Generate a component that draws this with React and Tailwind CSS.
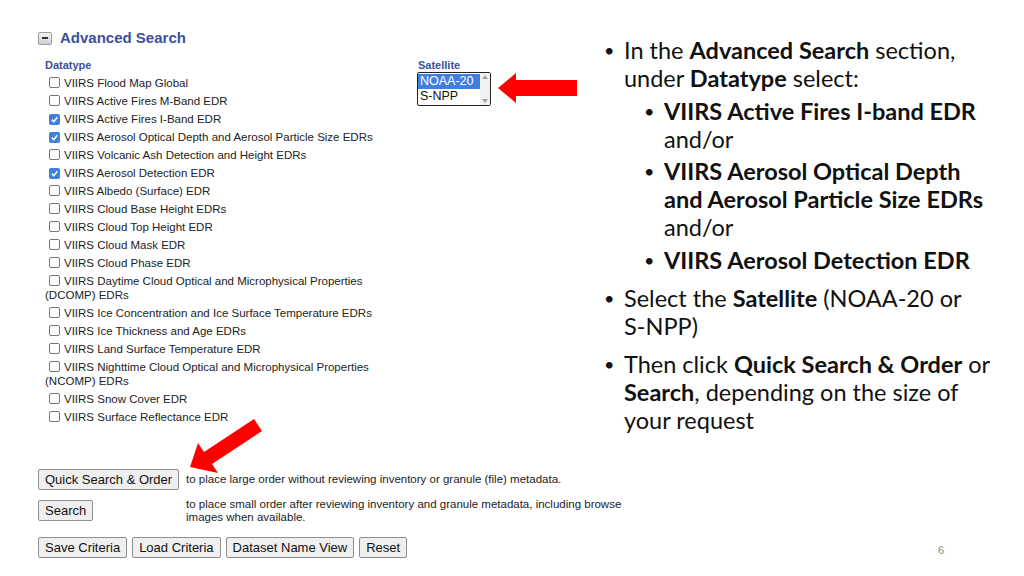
import React from 'react';

const datatypes = [
  { label: 'VIIRS Flood Map Global' },
  { label: 'VIIRS Active Fires M-Band EDR' },
  { label: 'VIIRS Active Fires I-Band EDR', checked: true },
  { label: 'VIIRS Aerosol Optical Depth and Aerosol Particle Size EDRs', checked: true },
  { label: 'VIIRS Volcanic Ash Detection and Height EDRs' },
  { label: 'VIIRS Aerosol Detection EDR', checked: true },
  { label: 'VIIRS Albedo (Surface) EDR' },
  { label: 'VIIRS Cloud Base Height EDRs' },
  { label: 'VIIRS Cloud Top Height EDR' },
  { label: 'VIIRS Cloud Mask EDR' },
  { label: 'VIIRS Cloud Phase EDR' },
  { label: 'VIIRS Daytime Cloud Optical and Microphysical Properties (DCOMP) EDRs' },
  { label: 'VIIRS Ice Concentration and Ice Surface Temperature EDRs' },
  { label: 'VIIRS Ice Thickness and Age EDRs' },
  { label: 'VIIRS Land Surface Temperature EDR' },
  { label: 'VIIRS Nighttime Cloud Optical and Microphysical Properties (NCOMP) EDRs' },
  { label: 'VIIRS Snow Cover EDR' },
  { label: 'VIIRS Surface Reflectance EDR' },
];

function Checkbox({ checked }) {
  if (checked) {
    return (
      <span className="inline-flex w-[11px] h-[11px] ml-[4px] mr-[4px] align-[-1px] rounded-[2px] bg-[#3f7fe0] items-center justify-center">
        <svg width="9" height="9" viewBox="0 0 10 10">
          <path d="M2 5.2 L4.2 7.4 L8.2 2.6" stroke="white" strokeWidth="1.8" fill="none" />
        </svg>
      </span>
    );
  }
  return (
    <span className="inline-block w-[11px] h-[11px] ml-[4px] mr-[4px] align-[-1px] rounded-[2px] border border-[#767676] bg-white" />
  );
}

function Btn({ children }) {
  return (
    <button className="h-[21px] px-[6px] bg-[#efefef] border border-[#8f8f8f] rounded-[2px] text-[13px] text-[#111] leading-none whitespace-nowrap">
      {children}
    </button>
  );
}

function Bullet({ children, sub }) {
  return (
    <div className={`flex ${sub ? 'pl-[44px]' : 'pl-[4px]'}`}>
      <span className="w-[20px] shrink-0 text-[18px]">•</span>
      <div className="flex-1 whitespace-nowrap">{children}</div>
    </div>
  );
}

export default function App() {
  return (
    <div className="w-[1024px] h-[576px] bg-white relative overflow-hidden flex">
      {/* Left: screenshot of search form */}
      <div className="w-[600px] shrink-0 pl-[38px] pt-[27px] font-['Liberation_Sans',Arial,sans-serif]">
        <div className="flex items-center gap-[8px]">
          <span className="w-[14px] h-[13px] rounded-[2px] border border-[#9a9a9a] bg-gradient-to-b from-[#f4f4f4] to-[#cfcfcf] flex items-center justify-center">
            <span className="w-[6px] h-[2px] bg-[#333]" />
          </span>
          <span className="text-[15px] font-bold text-[#3b4f9c]">Advanced Search</span>
        </div>

        <div className="flex mt-[8px]">
          <div className="w-[379px] pl-[7px] text-[11.5px] text-[#222] leading-[14px]">
            <div className="font-bold text-[#3b4f9c] text-[11px] mb-[1px]">Datatype</div>
            {datatypes.map((d) => (
              <div key={d.label} className="mt-[4px] w-[340px]">
                <Checkbox checked={d.checked} />
                {d.label}
              </div>
            ))}
          </div>

          <div>
            <div className="font-bold text-[#3b4f9c] text-[11px] leading-[14px] ml-[1px]">Satellite</div>
            <div className="flex items-start">
              <div className="w-[74px] h-[34px] border border-[#222] rounded-[2px] flex bg-white text-[12.5px] leading-[15px]">
                <div className="flex-1 pt-[1px]">
                  <div className="bg-[#3f7fe0] text-white pl-[2px]">NOAA-20</div>
                  <div className="text-[#111] pl-[2px]">S-NPP</div>
                </div>
                <div className="w-[10px] bg-[#f1f1f1] flex flex-col justify-between items-center py-[2px]">
                  <span className="w-0 h-0 border-l-[3px] border-r-[3px] border-b-[4px] border-l-transparent border-r-transparent border-b-[#a3a3a3]" />
                  <span className="w-0 h-0 border-l-[3px] border-r-[3px] border-t-[4px] border-l-transparent border-r-transparent border-t-[#a3a3a3]" />
                </div>
              </div>
              <svg width="80" height="34" viewBox="0 0 80 34" className="ml-[7px] mt-[-1px]">
                <polygon points="0,17 18,2 18,9 79,9 79,25 18,25 18,32" fill="#f00" />
              </svg>
            </div>
          </div>
        </div>

        <div className="mt-[45px] flex flex-col text-[11.5px] text-[#222]">
          <div className="flex items-center">
            <div className="w-[148px] shrink-0">
              <Btn>Quick Search &amp; Order</Btn>
            </div>
            <span className="leading-[13px] mt-[1px] whitespace-nowrap">to place large order without reviewing inventory or granule (file) metadata.</span>
          </div>
          <div className="flex items-start mt-[10px]">
            <div className="w-[148px] shrink-0">
              <Btn>Search</Btn>
            </div>
            <span className="leading-[13px] mt-[-2px] whitespace-nowrap">
              to place small order after reviewing inventory and granule metadata, including browse
              <br />
              images when available.
            </span>
          </div>
          <div className="flex gap-[5px] mt-[13px]">
            <Btn>Save Criteria</Btn>
            <Btn>Load Criteria</Btn>
            <Btn>Dataset Name View</Btn>
            <Btn>Reset</Btn>
          </div>
        </div>

        {/* diagonal red arrow pointing to Quick Search button */}
        <svg width="80" height="60" viewBox="0 0 80 60" className="absolute left-[188px] top-[415px]">
          <polygon points="2,52 10,28 16,37 66,4 74,16 24,49 30,58" fill="#f00" />
        </svg>
      </div>

      {/* Right: slide text */}
      <div className="flex-1 pt-[36px] font-['Lato',sans-serif] text-[23.5px] leading-[28px] text-[#111]">
        <Bullet>
          In the <b>Advanced Search</b> section,
          <br />
          under <b>Datatype</b> select:
        </Bullet>
        <div className="mt-[5px]">
          <Bullet sub>
            <b>VIIRS Active Fires I-band EDR</b>
            <br />
            and/or
          </Bullet>
        </div>
        <div className="mt-[4px]">
          <Bullet sub>
            <b>VIIRS Aerosol Optical Depth</b>
            <br />
            <b>and Aerosol Particle Size EDRs</b>
            <br />
            and/or
          </Bullet>
        </div>
        <div className="mt-[5px]">
          <Bullet sub>
            <b>VIIRS Aerosol Detection EDR</b>
          </Bullet>
        </div>
        <div className="mt-[10px]">
          <Bullet>
            Select the <b>Satellite</b> (NOAA-20 or
            <br />
            S-NPP)
          </Bullet>
        </div>
        <div className="mt-[10px]">
          <Bullet>
            Then click <b>Quick Search &amp; Order</b> or
            <br />
            <b>Search</b>, depending on the size of
            <br />
            your request
          </Bullet>
        </div>
      </div>

      <div className="absolute left-[938px] top-[542px] text-[11px] text-[#8a8a8a] font-['Liberation_Sans',sans-serif]">6</div>
    </div>
  );
}
